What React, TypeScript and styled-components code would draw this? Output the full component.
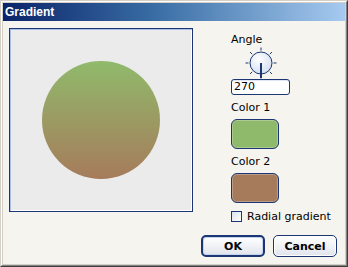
import styled, { createGlobalStyle } from 'styled-components';

const GlobalStyle = createGlobalStyle`
  html, body {
    margin: 0;
    padding: 0;
    background: #d4d0c8;
  }
  * {
    box-sizing: border-box;
  }
`;

const ink = '#1b3673';

const Window = styled.div`
  width: 348px;
  height: 267px;
  border: 1px solid;
  border-color: #d4d0c8 #404040 #404040 #d4d0c8;
  display: flex;
`;

const Frame = styled.div`
  flex: 1;
  border: 1px solid;
  border-color: #ffffff #808080 #808080 #ffffff;
  padding: 1px;
  background: #d4d0c8;
  display: flex;
  flex-direction: column;
`;

const TitleBar = styled.div`
  height: 18px;
  padding-left: 2px;
  display: flex;
  align-items: center;
  background: linear-gradient(to right, #0a246a 0%, #3a6ea5 45%, #a6caf0 100%);
  color: #ffffff;
  font-family: 'Liberation Sans', Arial, sans-serif;
  font-weight: 700;
  font-size: 12px;
`;

const Body = styled.div`
  flex: 1;
  background: #f5f4ee;
  padding: 7px 8px 7px 6px;
  display: flex;
  flex-direction: column;
  font-family: 'DejaVu Sans', Verdana, sans-serif;
  font-size: 11px;
  color: #000000;
`;

const TopRow = styled.div`
  display: flex;
  align-items: flex-start;
`;

const Preview = styled.div`
  width: 184px;
  height: 184px;
  border: 1px solid ${ink};
  box-shadow: inset 1px 1px 0 #a9bfe6, inset -1px -1px 0 #ffffff;
  background: #ebebeb;
  display: flex;
  align-items: center;
  justify-content: center;
`;

const Disc = styled.div<{ $from: string; $to: string }>`
  width: 118px;
  height: 118px;
  border-radius: 50%;
  background: linear-gradient(to bottom, ${(p) => p.$from}, ${(p) => p.$to});
`;

const Controls = styled.div`
  margin-left: 38px;
  display: flex;
  flex-direction: column;
  align-items: flex-start;
`;

const Label = styled.div<{ $top: number }>`
  line-height: 13px;
  margin-top: ${(p) => p.$top}px;
`;

const KnobWrap = styled.div`
  width: 59px;
  height: 32px;
  margin-top: 1px;
  display: flex;
  justify-content: center;
  padding-left: 1px;
`;

const AngleInput = styled.div`
  width: 59px;
  height: 16px;
  border: 1px solid ${ink};
  border-radius: 3px;
  background: #ffffff;
  box-shadow: inset 0 1px 0 #dfe7f4;
  padding-left: 2px;
  line-height: 14px;
`;

const Swatch = styled.div<{ $color: string }>`
  width: 48px;
  height: 30px;
  margin-top: 5px;
  border: 1px solid ${ink};
  border-radius: 6px;
  background: ${(p) => p.$color};
  box-shadow: inset 0 0 0 1px rgba(255, 255, 255, 0.25);
`;

const CheckRow = styled.label`
  margin-top: 7px;
  display: flex;
  align-items: center;
  gap: 5px;
  line-height: 13px;
`;

const CheckBox = styled.span`
  width: 11px;
  height: 11px;
  border: 1px solid ${ink};
  background: linear-gradient(135deg, #dce3ee, #ffffff);
`;

const ButtonRow = styled.div`
  margin-top: auto;
  display: flex;
  justify-content: flex-end;
  gap: 8px;
`;

const Button = styled.button<{ $default?: boolean }>`
  width: 64px;
  height: 22px;
  padding: 0;
  border: ${(p) => (p.$default ? 2 : 1)}px solid ${ink};
  border-radius: 5px;
  background: linear-gradient(to bottom, #ffffff 0%, #f1f2f6 50%, #dfe3ec 100%);
  box-shadow: ${(p) => (p.$default ? 'inset 0 0 0 1px #c6d3ee' : 'inset 0 0 0 1px #ffffff')};
  font-family: 'DejaVu Sans', Verdana, sans-serif;
  font-weight: 700;
  font-size: 11px;
  color: #000000;
`;

function AngleKnob({ angle }: { angle: number }) {
  const cx = 16;
  const cy = 16;
  const ticks = [0, 45, 90, 135, 180, 225, 270, 315];
  const rad = (angle * Math.PI) / 180;
  return (
    <svg width="32" height="32" viewBox="0 0 32 32">
      <defs>
        <radialGradient id="knobFill" cx="40%" cy="35%" r="70%">
          <stop offset="0%" stopColor="#ffffff" />
          <stop offset="100%" stopColor="#d3deef" />
        </radialGradient>
      </defs>
      {ticks.map((t) => {
        const a = (t * Math.PI) / 180;
        return (
          <line
            key={t}
            x1={cx + Math.cos(a) * 12.5}
            y1={cy - Math.sin(a) * 12.5}
            x2={cx + Math.cos(a) * 15.5}
            y2={cy - Math.sin(a) * 15.5}
            stroke={ink}
            strokeWidth="1"
          />
        );
      })}
      <circle cx={cx} cy={cy} r="11" fill="url(#knobFill)" stroke={ink} strokeWidth="1" />
      <line
        x1={cx}
        y1={cy}
        x2={cx + Math.cos(rad) * 15}
        y2={cy - Math.sin(rad) * 15}
        stroke={ink}
        strokeWidth="2"
      />
    </svg>
  );
}

export default function App() {
  const color1 = '#90ba6b';
  const color2 = '#a67b5b';
  return (
    <>
      <GlobalStyle />
      <Window>
        <Frame>
          <TitleBar>Gradient</TitleBar>
          <Body>
            <TopRow>
              <Preview>
                <Disc $from={color1} $to={color2} />
              </Preview>
              <Controls>
                <Label $top={5}>Angle</Label>
                <KnobWrap>
                  <AngleKnob angle={270} />
                </KnobWrap>
                <AngleInput>270</AngleInput>
                <Label $top={6}>Color 1</Label>
                <Swatch $color={color1} />
                <Label $top={6}>Color 2</Label>
                <Swatch $color={color2} />
                <CheckRow>
                  <CheckBox />
                  Radial gradient
                </CheckRow>
              </Controls>
            </TopRow>
            <ButtonRow>
              <Button $default>OK</Button>
              <Button>Cancel</Button>
            </ButtonRow>
          </Body>
        </Frame>
      </Window>
    </>
  );
}
